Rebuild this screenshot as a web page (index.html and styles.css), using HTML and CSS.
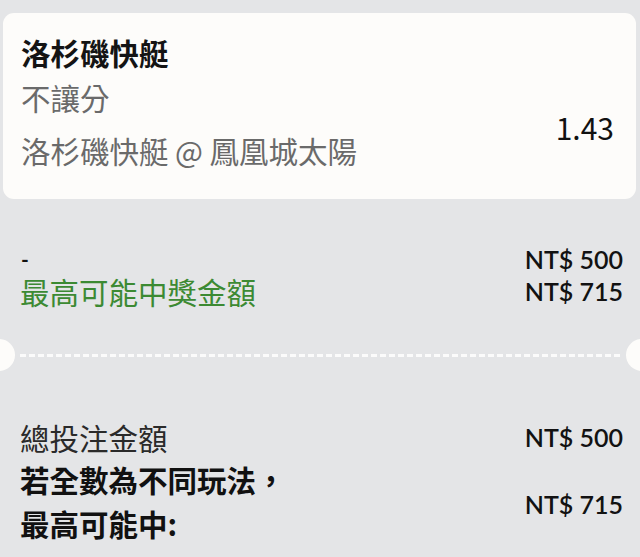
FILE: index.html
```html
<!DOCTYPE html>
<html lang="zh-Hant">
<head>
<meta charset="utf-8">
<title>投注單</title>
<link rel="stylesheet" href="styles.css">
</head>
<body>
<div class="page">
  <section class="card">
    <div class="bet">
      <div class="team">洛杉磯快艇</div>
      <div class="market">不讓分</div>
      <div class="match">洛杉磯快艇 @ 鳳凰城太陽</div>
    </div>
    <div class="odds">1.43</div>
  </section>

  <section class="stake">
    <div class="row"><span class="dash">-</span><span class="amt">NT$ 500</span></div>
    <div class="row"><span class="win">最高可能中獎金額</span><span class="amt">NT$ 715</span></div>
  </section>

  <div class="divider">
    <span class="notch notch-left"></span>
    <span class="dashes"></span>
    <span class="notch notch-right"></span>
  </div>

  <section class="summary">
    <div class="row total"><span class="label">總投注金額</span><span class="amt">NT$ 500</span></div>
    <div class="row payout"><span class="label strong">若全數為不同玩法，<br>最高可能中:</span><span class="amt">NT$ 715</span></div>
  </section>
</div>
</body>
</html>
```

FILE: styles.css
```css
html, body {
  margin: 0;
  padding: 0;
}

body {
  background: #e4e5e7;
  font-family: "Noto Sans CJK TC", "Noto Sans", sans-serif;
  color: #1a1a1a;
  overflow: hidden;
}

.page {
  width: 640px;
  height: 557px;
  padding-top: 13px;
  box-sizing: border-box;
}

.card {
  margin: 0 4px 0 3px;
  height: 186px;
  box-sizing: border-box;
  background: #fdfcfa;
  border-radius: 11px;
  padding: 20px 22px 0 18px;
  display: flex;
  justify-content: space-between;
  align-items: flex-start;
}

.bet {
  display: flex;
  flex-direction: column;
}

.team {
  font-size: 29.5px;
  line-height: 38px;
  font-weight: 700;
  color: #141414;
}

.market {
  margin-top: 7px;
  font-size: 29.5px;
  line-height: 38px;
  color: #6a6a6a;
}

.match {
  margin-top: 15px;
  font-size: 29.5px;
  line-height: 38px;
  color: #6a6a6a;
}

.odds {
  margin-top: 75px;
  font-size: 30px;
  line-height: 38px;
  font-weight: 400;
  color: #111;
}

.stake {
  margin-top: 44px;
  padding: 0 17px 0 20px;
}

.row {
  display: flex;
  justify-content: space-between;
  align-items: center;
}

.stake .row {
  height: 32px;
}

.dash {
  font-family: "Lato", sans-serif;
  font-weight: 700;
  font-size: 21px;
  line-height: 22px;
  padding-left: 1px;
  color: #111;
}

.win {
  font-size: 29.5px;
  line-height: 32px;
  color: #3c8a33;
}

.amt {
  font-family: "Lato", sans-serif;
  font-weight: 600;
  font-size: 25px;
  line-height: 30px;
  color: #121212;
}

.divider {
  margin-top: 32px;
  height: 32px;
  display: flex;
  align-items: center;
}

.notch {
  flex: none;
  width: 32px;
  height: 32px;
  border-radius: 50%;
  background: #fdfcfa;
}

.notch-left {
  margin-left: -17px;
}

.notch-right {
  margin-right: -18px;
}

.dashes {
  flex: 1;
  height: 3px;
  margin: 0 5px;
  background: repeating-linear-gradient(to right, #fbfbfb 0 6px, transparent 6px 9px);
}

.summary {
  margin-top: 46px;
  padding: 0 17px 0 20px;
}

.total .label {
  font-size: 29.5px;
  line-height: 40px;
  color: #2a2a2a;
}

.payout .label {
  font-size: 29.5px;
  line-height: 44px;
}

.payout .amt {
  margin-top: 6px;
}

.strong {
  font-weight: 700;
  color: #111;
}
```
